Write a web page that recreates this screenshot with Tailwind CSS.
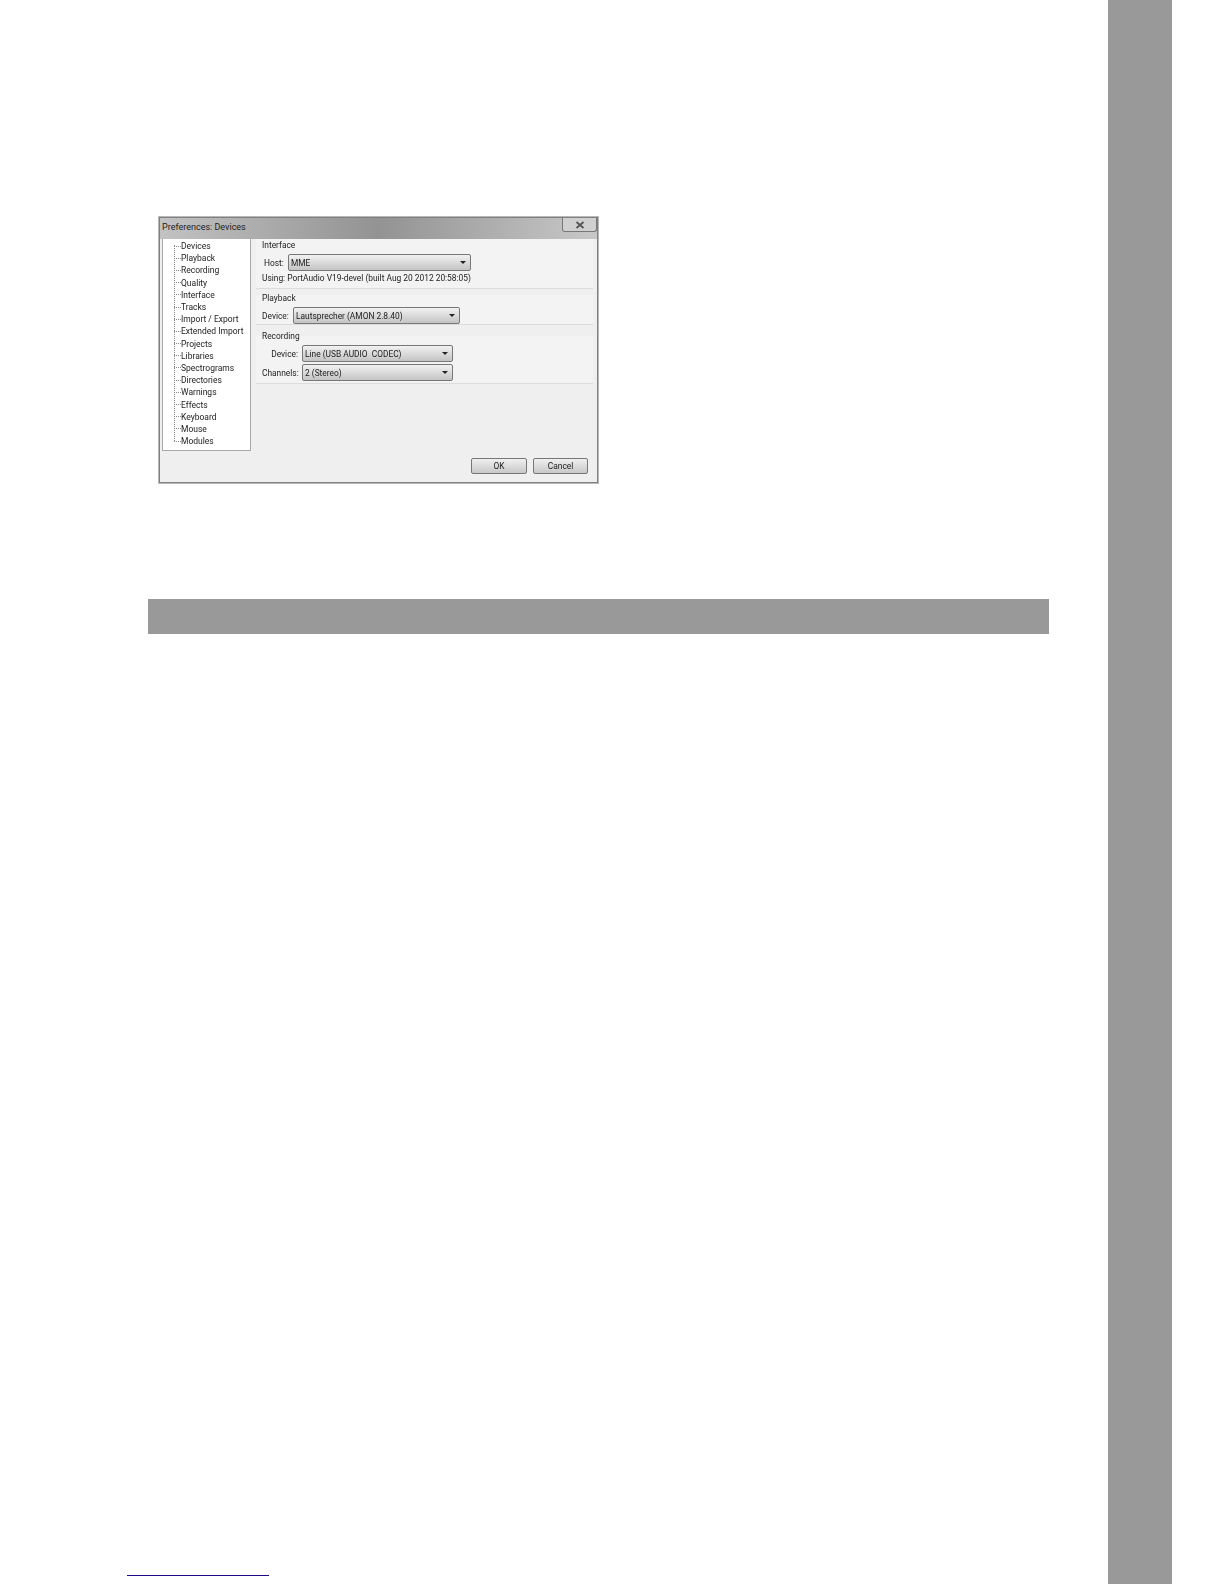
<!DOCTYPE html>
<html lang="en">

<head>
  <meta charset="UTF-8" />
  <meta name="viewport" content="width=device-width, initial-scale=1" />
  <title>Preferences: Devices</title>
  <script src="https://cdn.jsdelivr.net/npm/@tailwindcss/browser@4"></script>
</head>

<body class="bg-white h-[1584px] overflow-hidden flex font-['Roboto',sans-serif]">

  <!-- Page content -->
  <div class="w-[1108px] h-full flex flex-col pt-[217px]">

    <!-- Dialog screenshot -->
    <div class="ml-[159px] w-[439px] h-[266px] flex flex-col bg-[#efefef] border border-[#808080] shadow-[0_0_0_1px_#b8b8b8] text-[8.4px] leading-[12px] text-[#1c1c1c] blur-[0.4px]">
      <!-- Title bar -->
      <div class="h-[21px] shrink-0 flex items-start justify-between pl-[2px] bg-gradient-to-r from-[#c2c2c2] via-[#939393] to-[#c8c8c8]">
        <span class="mt-[3px] text-[9px] text-[#222]">Preferences: Devices</span>
        <div class="w-[35px] h-[14px] flex items-center justify-center bg-[#d0d0d0] border border-t-0 border-[#777] rounded-b-[3px]">
          <svg width="10" height="8" viewBox="0 0 10 8"><path d="M1.5 1l7 6M8.5 1l-7 6" stroke="#555" stroke-width="1.8" /></svg>
        </div>
      </div>

      <!-- Body -->
      <div class="flex-1 flex pl-[2px] pr-[4px] min-h-0">
        <!-- Tree -->
        <div class="w-[89px] h-[212px] shrink-0 bg-white border border-t-0 border-[#a8a8a8] pt-[1px] relative text-[8.5px]">
          <div class="absolute left-[11px] top-[6px] h-[196px] border-l border-dotted border-[#888]"></div>
          <ul class="flex flex-col">
            <li class="h-[12.2px] flex items-center pl-[11px] whitespace-nowrap"><span class="w-[7px] border-t border-dotted border-[#888]"></span>Devices</li>
            <li class="h-[12.2px] flex items-center pl-[11px] whitespace-nowrap"><span class="w-[7px] border-t border-dotted border-[#888]"></span>Playback</li>
            <li class="h-[12.2px] flex items-center pl-[11px] whitespace-nowrap"><span class="w-[7px] border-t border-dotted border-[#888]"></span>Recording</li>
            <li class="h-[12.2px] flex items-center pl-[11px] whitespace-nowrap"><span class="w-[7px] border-t border-dotted border-[#888]"></span>Quality</li>
            <li class="h-[12.2px] flex items-center pl-[11px] whitespace-nowrap"><span class="w-[7px] border-t border-dotted border-[#888]"></span>Interface</li>
            <li class="h-[12.2px] flex items-center pl-[11px] whitespace-nowrap"><span class="w-[7px] border-t border-dotted border-[#888]"></span>Tracks</li>
            <li class="h-[12.2px] flex items-center pl-[11px] whitespace-nowrap"><span class="w-[7px] border-t border-dotted border-[#888]"></span>Import / Export</li>
            <li class="h-[12.2px] flex items-center pl-[11px] whitespace-nowrap"><span class="w-[7px] border-t border-dotted border-[#888]"></span>Extended Import</li>
            <li class="h-[12.2px] flex items-center pl-[11px] whitespace-nowrap"><span class="w-[7px] border-t border-dotted border-[#888]"></span>Projects</li>
            <li class="h-[12.2px] flex items-center pl-[11px] whitespace-nowrap"><span class="w-[7px] border-t border-dotted border-[#888]"></span>Libraries</li>
            <li class="h-[12.2px] flex items-center pl-[11px] whitespace-nowrap"><span class="w-[7px] border-t border-dotted border-[#888]"></span>Spectrograms</li>
            <li class="h-[12.2px] flex items-center pl-[11px] whitespace-nowrap"><span class="w-[7px] border-t border-dotted border-[#888]"></span>Directories</li>
            <li class="h-[12.2px] flex items-center pl-[11px] whitespace-nowrap"><span class="w-[7px] border-t border-dotted border-[#888]"></span>Warnings</li>
            <li class="h-[12.2px] flex items-center pl-[11px] whitespace-nowrap"><span class="w-[7px] border-t border-dotted border-[#888]"></span>Effects</li>
            <li class="h-[12.2px] flex items-center pl-[11px] whitespace-nowrap"><span class="w-[7px] border-t border-dotted border-[#888]"></span>Keyboard</li>
            <li class="h-[12.2px] flex items-center pl-[11px] whitespace-nowrap"><span class="w-[7px] border-t border-dotted border-[#888]"></span>Mouse</li>
            <li class="h-[12.2px] flex items-center pl-[11px] whitespace-nowrap"><span class="w-[7px] border-t border-dotted border-[#888]"></span>Modules</li>
          </ul>
        </div>

        <!-- Settings -->
        <div class="flex-1 flex flex-col pl-[5px] min-w-0">
          <!-- Interface -->
          <div class="h-[50px] border-b border-[#dcdcdc] pl-[6px] bg-[#f3f3f3]">
            <div class="h-[12px]">Interface</div>
            <div class="flex items-center mt-[3px] pl-[2px] h-[17px]">
              <span class="w-[24px]">Host:</span>
              <div class="w-[183px] h-[17px] flex items-center justify-between pl-[2px] pr-[4px] rounded-[2px] border border-[#777] bg-gradient-to-b from-[#f2f2f2] to-[#c4c4c4]">
                <span>MME</span>
                <span class="w-0 h-0 border-x-[3px] border-x-transparent border-t-[3px] border-t-[#222]"></span>
              </div>
            </div>
            <div class="mt-[1px] whitespace-nowrap">Using: PortAudio V19-devel (built Aug 20 2012 20:58:05)</div>
          </div>

          <!-- Playback -->
          <div class="h-[30px] mt-[6px] border-b border-[#dcdcdc] pl-[6px] bg-[#f3f3f3]">
            <div class="h-[12px] -mt-[3px]">Playback</div>
            <div class="flex items-center mt-[3px] h-[17px]">
              <span class="w-[31px]">Device:</span>
              <div class="w-[167px] h-[17px] flex items-center justify-between pl-[2px] pr-[4px] rounded-[2px] border border-[#777] bg-gradient-to-b from-[#f2f2f2] to-[#c4c4c4]">
                <span>Lautsprecher (AMON 2.8.40)</span>
                <span class="w-0 h-0 border-x-[3px] border-x-transparent border-t-[3px] border-t-[#222]"></span>
              </div>
            </div>
          </div>

          <!-- Recording -->
          <div class="h-[48px] mt-[11px] border-b border-[#dcdcdc] pl-[6px] bg-[#f3f3f3]">
            <div class="h-[12px] -mt-[6px]">Recording</div>
            <div class="flex items-center mt-[3px] h-[17px]">
              <span class="w-[40px] text-right pr-[4px]">Device:</span>
              <div class="w-[151px] h-[17px] flex items-center justify-between pl-[2px] pr-[4px] rounded-[2px] border border-[#777] bg-gradient-to-b from-[#f2f2f2] to-[#c4c4c4]">
                <span class="whitespace-pre">Line (USB AUDIO  CODEC)</span>
                <span class="w-0 h-0 border-x-[3px] border-x-transparent border-t-[3px] border-t-[#222]"></span>
              </div>
            </div>
            <div class="flex items-center mt-[2px] h-[17px]">
              <span class="w-[40px] text-right pr-[4px]">Channels:</span>
              <div class="w-[151px] h-[17px] flex items-center justify-between pl-[2px] pr-[4px] rounded-[2px] border border-[#777] bg-gradient-to-b from-[#f2f2f2] to-[#c4c4c4]">
                <span>2 (Stereo)</span>
                <span class="w-0 h-0 border-x-[3px] border-x-transparent border-t-[3px] border-t-[#222]"></span>
              </div>
            </div>
          </div>

          <!-- Buttons -->
          <div class="mt-auto mb-[8px] flex justify-end gap-[6px] pr-[5px]">
            <button class="w-[56px] h-[16px] rounded-[2px] border border-[#777] bg-gradient-to-b from-[#f0f0f0] to-[#c8c8c8] leading-none">OK</button>
            <button class="w-[55px] h-[16px] rounded-[2px] border border-[#777] bg-gradient-to-b from-[#f0f0f0] to-[#c8c8c8] leading-none">Cancel</button>
          </div>
        </div>
      </div>
    </div>

    <!-- Gray band -->
    <div class="ml-[148px] mt-[116px] w-[901px] h-[35px] bg-[#999999]"></div>

    <!-- Footnote rule -->
    <div class="mt-auto mb-[8px] ml-[127px] w-[142px] h-[1px] bg-[#1a0a8a]"></div>
  </div>

  <!-- Right sidebar -->
  <div class="w-[64px] h-full bg-[#999999]"></div>
</body>

</html>
